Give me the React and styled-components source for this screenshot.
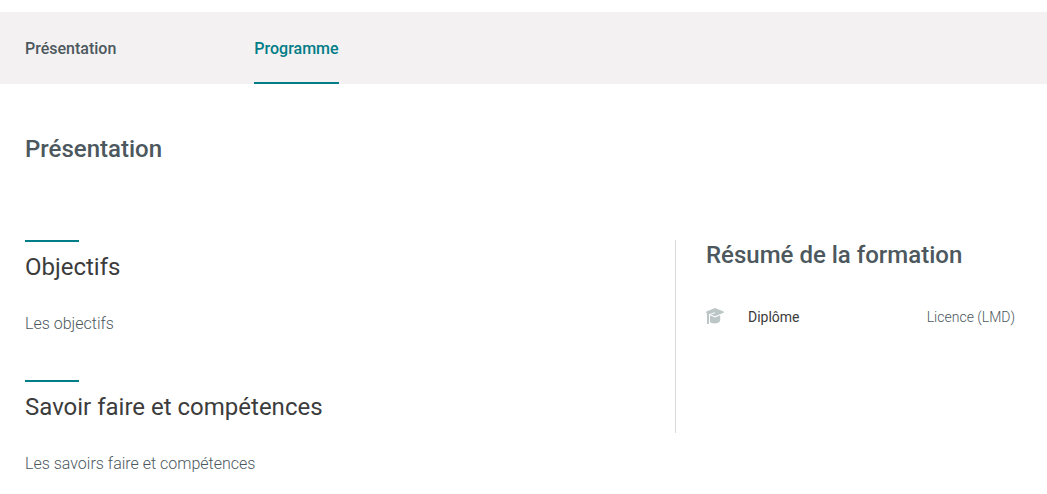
import styled, { createGlobalStyle } from "styled-components";

const GlobalStyle = createGlobalStyle`
  * {
    box-sizing: border-box;
  }

  body {
    margin: 0;
    background: #fff;
    color: #4c585e;
    font-family: Roboto, sans-serif;
  }
`;

const NavBar = styled.nav`
  display: flex;
  height: 72px;
  margin-top: 12px;
  padding: 0 25px;
  gap: 138px;
  background: #f3f1f1;
`;

const NavLink = styled.a`
  display: flex;
  align-items: center;
  border-top: 2px solid transparent;
  border-bottom: 2px solid ${({ $active }) => ($active ? "#007d87" : "transparent")};
  color: ${({ $active }) => ($active ? "#007d87" : "#4c585e")};
  font-size: 16px;
  font-weight: 500;
  text-decoration: none;
`;

const PageTitle = styled.h1`
  margin: 0;
  padding: 48px 25px 0;
  font-size: 24px;
  font-weight: 500;
  line-height: 34px;
`;

const Columns = styled.main`
  display: flex;
  align-items: flex-start;
  justify-content: space-between;
  padding: 74px 32px 0 25px;
`;

const Content = styled.div`
  display: flex;
  flex: 1;
  flex-direction: column;
  gap: 44px;
`;

const SectionTitle = styled.h2`
  margin: 0;
  color: #3c3c3c;
  font-size: 24px;
  font-weight: 400;
  line-height: 34px;

  &::before {
    content: "";
    display: block;
    width: 54px;
    height: 2px;
    margin-bottom: 8px;
    background: #007d87;
  }
`;

const Paragraph = styled.p`
  margin: 28px 0 0;
  font-size: 16px;
  font-weight: 300;
  line-height: 24px;
`;

const Summary = styled.aside`
  flex: 0 0 340px;
  min-height: 193px;
  padding-left: 30px;
  border-left: 1px solid #d8dcdc;
`;

const SummaryTitle = styled.h2`
  margin: 0;
  font-size: 24px;
  font-weight: 500;
  line-height: 30px;
`;

const SummaryList = styled.dl`
  margin: 36px 0 0;
`;

const SummaryRow = styled.div`
  display: flex;
  align-items: center;
  font-size: 14px;
  line-height: 22px;
`;

const CapIcon = styled.svg`
  width: 18px;
  height: 18px;
  margin-right: 24px;
  fill: #bcc6c7;
`;

const Term = styled.dt`
  color: #3c3c3c;
`;

const Value = styled.dd`
  margin: 0 0 0 auto;
  font-weight: 300;
`;

const sections = [
  { title: "Objectifs", text: "Les objectifs" },
  { title: "Savoir faire et compétences", text: "Les savoirs faire et compétences" },
];

const App = () => (
  <>
    <GlobalStyle />
    <NavBar>
      <NavLink href="#presentation">Présentation</NavLink>
      <NavLink href="#programme" $active>
        Programme
      </NavLink>
    </NavBar>
    <PageTitle id="presentation">Présentation</PageTitle>
    <Columns>
      <Content>
        {sections.map(({ title, text }) => (
          <section key={title}>
            <SectionTitle>{title}</SectionTitle>
            <Paragraph>{text}</Paragraph>
          </section>
        ))}
      </Content>
      <Summary>
        <SummaryTitle>Résumé de la formation</SummaryTitle>
        <SummaryList>
          <SummaryRow>
            <CapIcon viewBox="0 0 18 18" aria-hidden="true">
              <path d="M9 0 17.600 3.600Q18.300 4.200 17.600 4.800L9 8.300 4.600 6.500 9 5.200V4.300L3 6.300V16H1V5.400L.2 4.800Q-.2 4.200.4 3.600Z" />
              <path d="M4 7.300 9 9.400l5.200-2.100V12.500C13.600 15.200 10 15.800 6.500 15.300 5 15 4 14.300 4 13.300Z" />
            </CapIcon>
            <Term>Diplôme</Term>
            <Value>Licence (LMD)</Value>
          </SummaryRow>
        </SummaryList>
      </Summary>
    </Columns>
  </>
);

export default App;
